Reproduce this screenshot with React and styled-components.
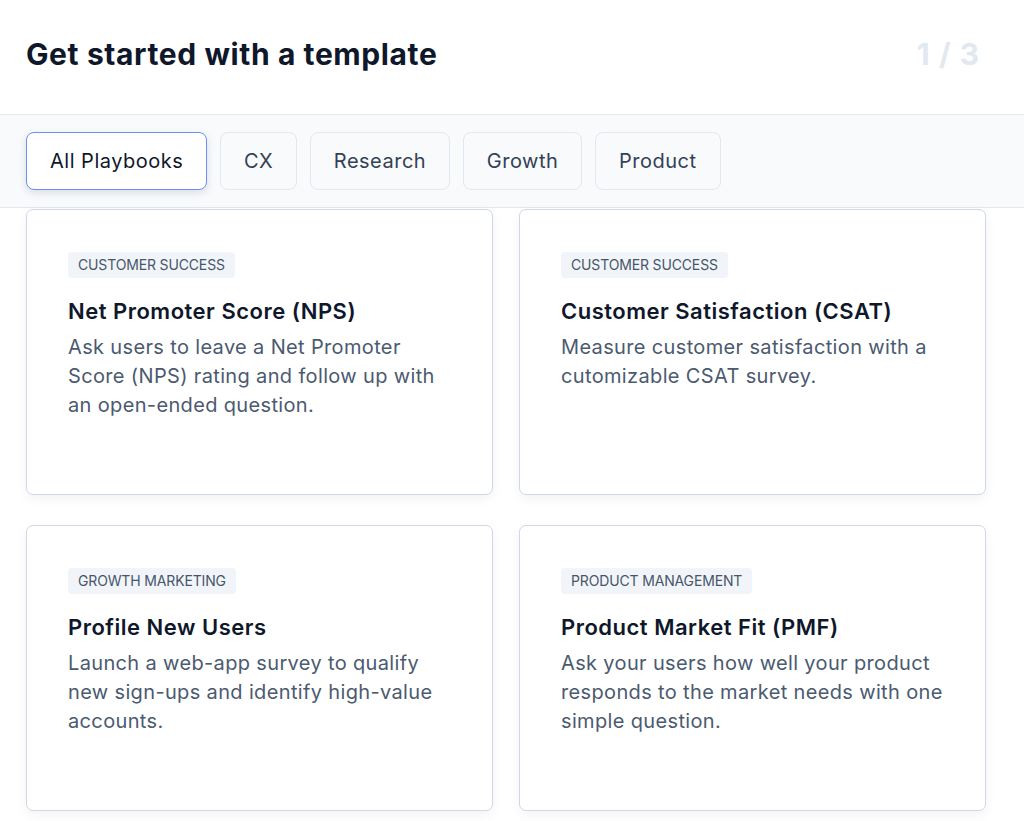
import styled, { createGlobalStyle } from "styled-components";

const GlobalStyle = createGlobalStyle`
  * { box-sizing: border-box; }
  body {
    margin: 0;
    background: #ffffff;
    font-family: Inter, "Noto Sans", sans-serif;
    -webkit-font-smoothing: antialiased;
  }
`;

const Page = styled.div`
  width: 1024px;
  height: 821px;
  overflow: hidden;
  background: #ffffff;
`;

const Header = styled.header`
  height: 114px;
  display: flex;
  align-items: center;
  justify-content: space-between;
  padding: 0 44px 6px 26px;
`;

const Title = styled.h1`
  margin: 0;
  font-size: 30px;
  font-weight: 700;
  color: #0f172a;
  letter-spacing: 0.6px;
`;

const Pager = styled.span`
  font-size: 30px;
  font-weight: 700;
  color: #e2e8f0;
  letter-spacing: 1px;
`;

const TabBar = styled.nav`
  display: flex;
  gap: 12.7px;
  padding: 17px 26px;
  background: #f8fafc;
  border-top: 1px solid #e2e8f0;
  border-bottom: 1px solid #e2e8f0;
`;

const Tab = styled.button`
  height: 58px;
  padding: 0 23px;
  font-family: inherit;
  font-size: 20px;
  letter-spacing: 0.5px;
  color: ${(p) => (p.$active ? "#0f172a" : "#334155")};
  background: ${(p) => (p.$active ? "#ffffff" : "#f8fafc")};
  border: 1px solid ${(p) => (p.$active ? "#6d8ff5" : "#e2e8f0")};
  border-radius: 8px;
  box-shadow: ${(p) => (p.$active ? "0 3px 8px rgba(15, 23, 42, 0.12)" : "none")};
  cursor: pointer;
`;

const Grid = styled.section`
  display: grid;
  grid-template-columns: 467px 467px;
  column-gap: 26px;
  row-gap: 30px;
  padding: 1px 38px 0 26px;
`;

const Card = styled.article`
  height: 286px;
  padding: 42px 38px 0 41px;
  background: #ffffff;
  border: 1px solid #cfd8e6;
  border-radius: 7px;
  box-shadow: 0 4px 12px rgba(15, 23, 42, 0.05);
`;

const Tag = styled.span`
  display: inline-block;
  height: 26px;
  line-height: 26px;
  padding: 0 10px;
  font-size: 14px;
  letter-spacing: -0.15px;
  color: #475569;
  background: #f1f5f9;
  border-radius: 4px;
  text-transform: uppercase;
`;

const CardTitle = styled.h2`
  margin: 18px 0 0;
  font-size: 22px;
  line-height: 30px;
  font-weight: 600;
  letter-spacing: 0.5px;
  color: #0f172a;
`;

const Description = styled.p`
  margin: 7px 0 0;
  font-size: 20px;
  line-height: 29px;
  letter-spacing: 0.35px;
  color: #4b5a70;
`;

const tabs = ["All Playbooks", "CX", "Research", "Growth", "Product"];

const templates = [
  {
    tag: "Customer Success",
    title: "Net Promoter Score (NPS)",
    text: "Ask users to leave a Net Promoter Score (NPS) rating and follow up with an open-ended question.",
  },
  {
    tag: "Customer Success",
    title: "Customer Satisfaction (CSAT)",
    text: "Measure customer satisfaction with a cutomizable CSAT survey.",
  },
  {
    tag: "Growth Marketing",
    title: "Profile New Users",
    text: "Launch a web-app survey to qualify new sign-ups and identify high-value accounts.",
  },
  {
    tag: "Product Management",
    title: "Product Market Fit (PMF)",
    text: "Ask your users how well your product responds to the market needs with one simple question.",
  },
];

export default function App() {
  return (
    <>
      <GlobalStyle />
      <Page>
        <Header>
          <Title>Get started with a template</Title>
          <Pager>1 / 3</Pager>
        </Header>
        <TabBar>
          {tabs.map((t, i) => (
            <Tab key={t} $active={i === 0}>
              {t}
            </Tab>
          ))}
        </TabBar>
        <Grid>
          {templates.map((item) => (
            <Card key={item.title}>
              <Tag>{item.tag}</Tag>
              <CardTitle>{item.title}</CardTitle>
              <Description>{item.text}</Description>
            </Card>
          ))}
        </Grid>
      </Page>
    </>
  );
}
